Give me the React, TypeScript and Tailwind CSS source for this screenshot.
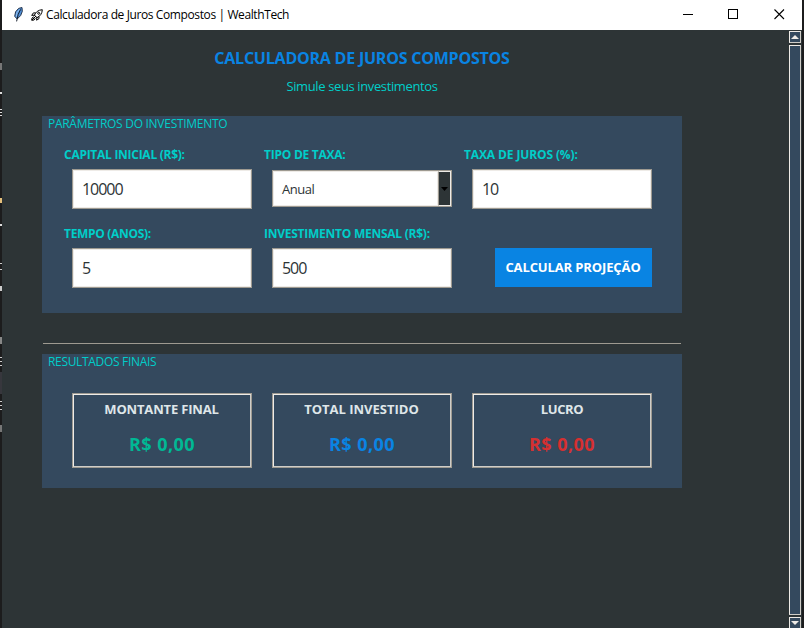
import type { ReactNode } from 'react';

function Feather() {
  return (
    <svg className="h-4 w-[10px] shrink-0" viewBox="0 0 10 16" fill="none">
      <path d="M3.2 12 L0.7 9.3 L1.6 4.8 L4.6 1.4 L8 0.5 L8.3 4.4 L6.6 8.6 Z" fill="#4f8fd8" stroke="#27374f" strokeWidth="1" />
      <path d="M2.4 9.5 L3 5.6 L5.4 2.6" stroke="#9cc6f2" strokeWidth="1" />
      <path d="M6.6 2.4 L4.2 7.4 L2.6 14.4" stroke="#16202e" strokeWidth="1" />
    </svg>
  );
}

function Rocket() {
  return (
    <svg className="h-3 w-3 shrink-0" viewBox="0 0 12 12" fill="none" stroke="#000" strokeWidth="1">
      <path d="M3.4 6.2 C4.6 3.2 7.2 0.9 11.3 0.7 C11.2 4.6 9 7.3 5.9 8.7 Z" />
      <path d="M4.6 3.9 H2.4 L0.7 6.4 L3.4 6.2 L5.9 8.7 L5.6 11.2 L8 9.6 V7.4" />
      <circle cx="7.7" cy="4.3" r="1" />
      <path d="M2.9 7.7 L1 9 L0.7 11.3 L3.1 11 L4.4 9.2 M1 11 L5 7" />
    </svg>
  );
}

function TitleBar() {
  return (
    <header className="flex h-[30px] shrink-0 items-center bg-white pl-3">
      <Feather />
      <div className="ml-[7px] flex items-center gap-[3px]">
        <Rocket />
        <span className="h-[30px] whitespace-nowrap text-[12px] leading-[30px] tracking-[-0.39px] text-black">
          Calculadora de Juros Compostos | WealthTech
        </span>
      </div>
      <svg className="ml-auto mr-[17px] h-3 w-[102px] shrink-0" viewBox="0 0 102 12" fill="none" stroke="#000" shapeRendering="crispEdges">
        <path d="M0 5.5 H10" />
        <rect x="45.5" y="0.5" width="9" height="9" />
        <path d="M91.5 0.5 L101 10 M101 0.5 L91.5 10" shapeRendering="auto" strokeWidth="1.1" />
      </svg>
    </header>
  );
}

function ScrollBar() {
  const box = 'border border-t-[#eeebe7] border-l-[#eeebe7] border-r-[#cfcdc8] border-b-[#cfcdc8] bg-[#34495e]';
  return (
    <div className="flex w-3 shrink-0 flex-col gap-[2px] pt-px">
      <div className={`${box} flex h-3 items-center justify-center`}>
        <svg className="h-1 w-2" viewBox="0 0 8 4"><path d="M4 0 L8 4 H0 Z" fill="#eeebe7" /></svg>
      </div>
      <div className={`${box} h-[570px]`} />
      <div className={`${box} flex h-[12px] shrink-0 items-center justify-center`}>
        <svg className="h-1 w-2" viewBox="0 0 8 4"><path d="M0 0 H8 L4 4 Z" fill="#eeebe7" /></svg>
      </div>
    </div>
  );
}

function Field({ label, tracking, children }: { label: string; tracking: string; children: ReactNode }) {
  return (
    <div className="flex h-[63px] w-[200px] flex-col">
      <label className={`h-4 whitespace-nowrap text-[12px] font-bold leading-[18px] text-[#00cec9] ${tracking}`}>{label}</label>
      <div className="ml-2 mt-[7px] flex h-10 w-[180px] items-center">{children}</div>
    </div>
  );
}

function Entry({ value }: { value: string }) {
  return (
    <div className="h-10 w-full border border-[#9e9a91] bg-white">
      <div className="h-full border border-[#eeebe7] pl-2 text-[16px] leading-9 tracking-[-1.05px] text-[#2d3436]">{value}</div>
    </div>
  );
}

function Combo({ value }: { value: string }) {
  return (
    <div className="mb-[1px] flex h-[37px] w-full border border-[#9e9a91] bg-white">
      <div className="flex-1 border border-[#eeebe7] pl-2 text-[13px] leading-[34px] tracking-[-0.45px] text-[#2d3436]">{value}</div>
      <div className="flex w-[13px] items-center justify-center border border-[#eeebe7] border-l-[#9e9a91] bg-[#2d3436]">
        <svg className="h-1 w-[7px]" viewBox="0 0 7 4"><path d="M0 0 H7 L3.5 4 Z" fill="#000" /></svg>
      </div>
    </div>
  );
}

function Result({ title, tracking, color }: { title: string; tracking: string; color: string }) {
  return (
    <div className="h-[75px] w-[180px] border border-[#9e9a91]">
      <div className="h-full border border-[#eeebe7] border-b-[#cfcdc8] border-r-[#cfcdc8] pt-[6px] text-center font-bold">
        <div className={`text-[13px] leading-4 text-[#dfe6e9] ${tracking}`}>{title}</div>
        <div className={`mt-[15px] text-[18px] leading-6 tracking-[0.45px] ${color}`}>R$ 0,00</div>
      </div>
    </div>
  );
}

const fragments: [number, number, string][] = [
  [33, 7, '#777'], [62, 2, '#ddd'], [79, 1, '#ddd'], [82, 1, '#ddd'], [85, 1, '#ddd'],
  [168, 5, '#e5c07b'], [194, 2, '#ddd'], [233, 1, '#ccc'], [239, 1, '#ccc'], [256, 5, '#ccc'],
  [307, 7, '#888'], [327, 1, '#ccc'], [331, 1, '#ccc'], [335, 1, '#ccc'], [342, 22, '#37373d'],
  [371, 1, '#ccc'], [375, 1, '#ccc'], [379, 1, '#ccc'], [395, 7, '#777'],
];

export default function App() {
  return (
    <div className="flex h-[628px] w-[804px] overflow-hidden bg-[#1c1c1d] font-['Open_Sans','Noto_Sans',sans-serif]">
      <svg className="h-[628px] w-[2px] shrink-0" viewBox="0 0 2 628" shapeRendering="crispEdges">
        {fragments.map(([y, h, fill]) => <rect key={y} x="0" y={y + 30} width="2" height={h} fill={fill} />)}
      </svg>
      <div className="flex w-[800px] shrink-0 flex-col bg-[#2d3436]">
        <TitleBar />
        <div className="flex flex-1">
          <main className="ml-10 w-[640px]">
            <h1 className="mt-[18px] whitespace-nowrap text-center text-[16px] font-bold leading-[21px] tracking-[-0.22px] text-[#0984e3]">
              CALCULADORA DE JUROS COMPOSTOS
            </h1>
            <p className="mt-[7px] text-center text-[13px] leading-5 tracking-[-0.38px] text-[#00cec9]">Simule seus investimentos</p>

            <section className="mt-5 h-[197px] bg-[#34495e]">
              <h2 className="pl-[6px] text-[12px] leading-[15px] tracking-[-0.28px] text-[#00cec9]">PARÂMETROS DO INVESTIMENTO</h2>
              <div className="mt-[15px] grid grid-cols-[200px_200px_200px] gap-y-4 pl-[22px]">
                <Field label="CAPITAL INICIAL (R$):" tracking="tracking-[-0.27px]"><Entry value="10000" /></Field>
                <Field label="TIPO DE TAXA:" tracking="tracking-[-0.25px]"><Combo value="Anual" /></Field>
                <Field label="TAXA DE JUROS (%):" tracking="tracking-[-0.12px]"><Entry value="10" /></Field>
                <Field label="TEMPO (ANOS):" tracking="tracking-[-0.32px]"><Entry value="5" /></Field>
                <Field label="INVESTIMENTO MENSAL (R$):" tracking="tracking-[-0.25px]"><Entry value="500" /></Field>
                <button className="ml-[31px] mt-[23px] h-[39px] w-[157px] whitespace-nowrap bg-[#0984e3] pr-px pt-px text-[13px] font-bold tracking-[-0.12px] text-white">
                  CALCULAR PROJEÇÃO
                </button>
              </div>
            </section>

            <hr className="mx-px mt-[30px] border-t border-[#9e9a91]" />

            <section className="mt-[10px] h-[134px] bg-[#34495e]">
              <h2 className="pl-[6px] text-[12px] leading-[15px] tracking-[-0.32px] text-[#00cec9]">RESULTADOS FINAIS</h2>
              <div className="mt-6 flex gap-5 pl-[30px]">
                <Result title="MONTANTE FINAL" tracking="tracking-[-0.17px] pr-px" color="text-[#00b894]" />
                <Result title="TOTAL INVESTIDO" tracking="tracking-normal pr-px" color="text-[#0984e3]" />
                <Result title="LUCRO" tracking="tracking-[-0.4px]" color="text-[#d63031]" />
              </div>
            </section>
          </main>
          <div className="ml-auto mr-px flex">
            <ScrollBar />
          </div>
        </div>
      </div>
    </div>
  );
}
